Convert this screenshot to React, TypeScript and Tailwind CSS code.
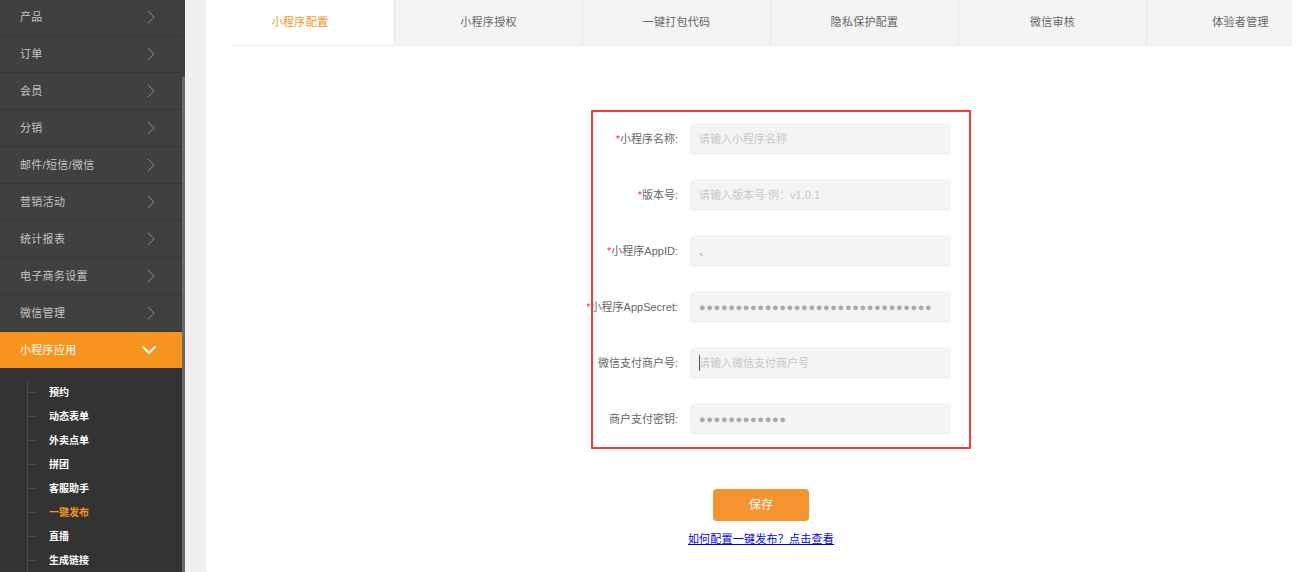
import React from 'react';
import { ChevronRight, ChevronDown } from 'lucide-react';

const menus = ['产品', '订单', '会员', '分销', '邮件/短信/微信', '营销活动', '统计报表', '电子商务设置', '微信管理'];
const subMenus = ['预约', '动态表单', '外卖点单', '拼团', '客服助手', '一键发布', '直播', '生成链接'];
const tabs = ['小程序配置', '小程序授权', '一键打包代码', '隐私保护配置', '微信审核', '体验者管理'];

const fields = [
  { label: '小程序名称:', required: true, placeholder: '请输入小程序名称' },
  { label: '版本号:', required: true, placeholder: '请输入版本号 例：v1.0.1' },
  { label: '小程序AppID:', required: true, value: '、' },
  { label: '小程序AppSecret:', required: true, secret: 32 },
  { label: '微信支付商户号:', required: false, placeholder: '请输入微信支付商户号', caret: true },
  { label: '商户支付密钥:', required: false, secret: 12 },
];

const Sidebar = () => {
  return (
    <div className="flex h-full shrink-0">
      <div className="w-[182px] h-full bg-[#404040] overflow-hidden">
        <ul className="-mt-px">
          {menus.map((m) => (
            <li key={m} className="relative h-[37px] border-b border-[#363636] flex items-center pl-5 pt-px text-[11px] tracking-[0.3px] text-[#c4c4c4]">
              {m}
              <ChevronRight size={24} strokeWidth={1} className="absolute left-[139px] top-[6px] text-[#8a8a8a]" />
            </li>
          ))}
          <li className="relative h-[37px] border-b border-[#363636] bg-[#f7941d] flex items-center pl-5 pt-px text-[11px] tracking-[0.3px] text-white">
            小程序应用
            <ChevronDown size={24} strokeWidth={2} className="absolute left-[137px] top-[6px] text-white" />
          </li>
        </ul>
        <div className="bg-[#333333] h-full pt-[11px]">
          <ul className="relative ml-[27px] border-l border-[#4a4a4a]">
            {subMenus.map((s) => (
              <li key={s} className="relative h-6 flex items-center pl-[21px] pt-px text-[10px] font-semibold">
                <span className="absolute left-0 top-[12px] w-[9px] h-px bg-[#4a4a4a]" />
                <span className={s === '一键发布' ? 'text-[#f7941d]' : 'text-white'}>{s}</span>
              </li>
            ))}
          </ul>
        </div>
      </div>
      <div className="w-[3px] h-full bg-[#404040] flex flex-col">
        <div className="h-[77px]" />
        <div className="flex-1 bg-[#6a6a6a]" />
      </div>
      <div className="w-[21px] h-full bg-[#f0f0f0]" />
    </div>
  );
};

const Field = ({ f }: { f: (typeof fields)[number] }) => {
  return (
    <div className="flex items-center h-8">
      <label className="w-[85px] shrink-0 flex justify-end text-[11px] text-[#666] whitespace-nowrap">
        {f.required && <span className="text-[#f03c3c]">*</span>}
        <span>{f.label}</span>
      </label>
      <div className="ml-3 w-[261px] h-8 rounded bg-[#f4f4f4] flex items-center pl-[9px] text-[11px] relative">
        {f.placeholder && <span className="text-[#c8c8c8]">{f.placeholder}</span>}
        {f.value && <span className="text-[#999]">{f.value}</span>}
        {f.secret && (
          <span className="text-[#aaa] text-[11px] tracking-[0.65px]">{'●'.repeat(f.secret)}</span>
        )}
        {f.caret && <span className="absolute left-[9px] top-[8px] w-px h-4 bg-[#555]" />}
      </div>
    </div>
  );
};

export default function App() {
  return (
    <div
      className="flex h-[572px] w-[1316px] overflow-hidden bg-white"
      style={{ fontFamily: '"Liberation Sans", "Noto Sans CJK SC", sans-serif' }}
    >
      <Sidebar />
      <main className="flex-1 flex flex-col">
        <div className="w-[1086px] overflow-hidden">
          <div className="flex h-[45px]">
            {tabs.map((t, i) => (
              <div
                key={t}
                className={
                  i === 0
                    ? 'w-[188px] shrink-0 flex items-center justify-center text-[11px] tracking-[0.3px] text-[#f7941d] bg-white'
                    : 'w-[188px] shrink-0 flex items-center justify-center text-[11px] tracking-[0.3px] text-[#666] bg-[#f4f4f4] border-l border-[#e6e6e6]'
                }
              >
                {t}
              </div>
            ))}
          </div>
          <div className="ml-[26px] h-px bg-[#ececec]" />
        </div>

        <div className="ml-[385px] mt-[64px] w-[380px] h-[339px] border-2 border-[#f03c3c] pt-[11px] flex flex-col gap-6">
          {fields.map((f) => (
            <Field key={f.label} f={f} />
          ))}
        </div>

        <div className="flex flex-col items-center mt-10">
          <button className="w-24 h-8 rounded bg-[#f59331] text-white text-[12px]">保存</button>
          <a href="#" className="mt-[10px] text-[11px] tracking-[0.25px] text-[#0000ee] underline">
            如何配置一键发布？点击查看
          </a>
        </div>
      </main>
    </div>
  );
}
